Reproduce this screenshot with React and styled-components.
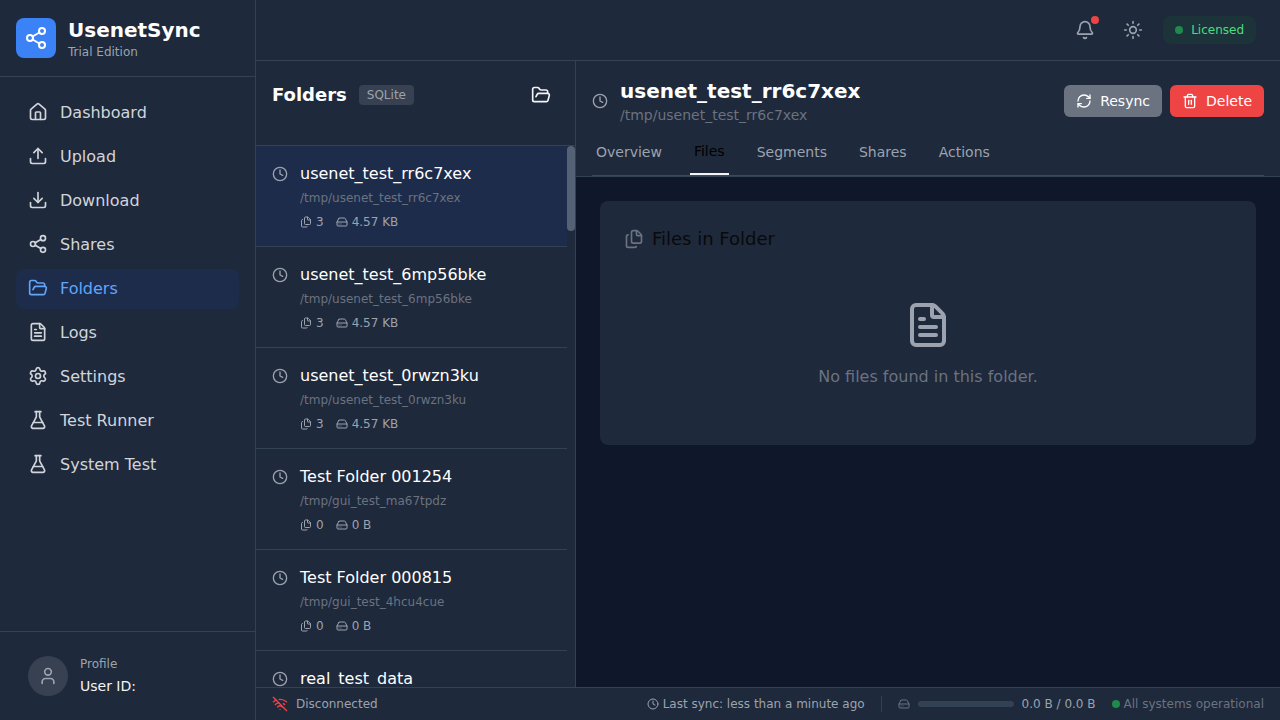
import React from 'react';
import styled, { createGlobalStyle } from 'styled-components';
import {
  Bell, Clock, Download, FileText, Files, FlaskConical, FolderOpen, HardDrive, House,
  RefreshCw, Settings, Share2, Sun, Trash2, Upload, User, WifiOff,
} from 'lucide-react';

const navItems = [
  { label: 'Dashboard', icon: House },
  { label: 'Upload', icon: Upload },
  { label: 'Download', icon: Download },
  { label: 'Shares', icon: Share2 },
  { label: 'Folders', icon: FolderOpen, active: true },
  { label: 'Logs', icon: FileText },
  { label: 'Settings', icon: Settings },
  { label: 'Test Runner', icon: FlaskConical },
  { label: 'System Test', icon: FlaskConical },
];

const folders = [
  { name: 'usenet_test_rr6c7xex', path: '/tmp/usenet_test_rr6c7xex', files: 3, size: '4.57 KB', active: true },
  { name: 'usenet_test_6mp56bke', path: '/tmp/usenet_test_6mp56bke', files: 3, size: '4.57 KB' },
  { name: 'usenet_test_0rwzn3ku', path: '/tmp/usenet_test_0rwzn3ku', files: 3, size: '4.57 KB' },
  { name: 'Test Folder 001254', path: '/tmp/gui_test_ma67tpdz', files: 0, size: '0 B' },
  { name: 'Test Folder 000815', path: '/tmp/gui_test_4hcu4cue', files: 0, size: '0 B' },
  { name: 'real_test_data', path: '/tmp/real_test_data', files: 0, size: '0 B' },
];

const tabs = ['Overview', 'Files', 'Segments', 'Shares', 'Actions'];

const App = () => (
  <>
    <GlobalStyle />
    <Page>
      <Sidebar>
        <Brand>
          <BrandIcon><Share2 size={24} color="#fff" /></BrandIcon>
          <div>
            <BrandName>UsenetSync</BrandName>
            <BrandEdition>Trial Edition</BrandEdition>
          </div>
        </Brand>
        <Nav>
          {navItems.map(({ label, icon: Icon, active }) => (
            <NavItem key={label} $active={active}>
              <Icon size={20} />
              {label}
            </NavItem>
          ))}
        </Nav>
        <Profile>
          <Avatar><User size={20} /></Avatar>
          <div>
            <ProfileLabel>Profile</ProfileLabel>
            <ProfileId>User ID:</ProfileId>
          </div>
        </Profile>
      </Sidebar>

      <Main>
        <TopBar>
          <IconButton>
            <Bell size={20} />
            <BellDot />
          </IconButton>
          <IconButton><Sun size={20} /></IconButton>
          <License><LicenseDot />Licensed</License>
        </TopBar>

        <Workspace>
          <FolderPanel>
            <FolderHead>
              <FolderTitle>Folders</FolderTitle>
              <Badge>SQLite</Badge>
              <OpenButton><FolderOpen size={20} /></OpenButton>
            </FolderHead>
            <FolderList>
              {folders.map((f) => (
                <FolderRow key={f.name} $active={f.active}>
                  <RowIcon><Clock size={16} /></RowIcon>
                  <div>
                    <RowName>{f.name}</RowName>
                    <RowPath>{f.path}</RowPath>
                    <RowMeta>
                      <MetaItem><Files size={12} />{f.files}</MetaItem>
                      <MetaItem><HardDrive size={12} />{f.size}</MetaItem>
                    </RowMeta>
                  </div>
                </FolderRow>
              ))}
              <ScrollThumb />
            </FolderList>
          </FolderPanel>

          <Detail>
            <DetailHead>
              <DetailTop>
                <RowIcon $plain><Clock size={16} /></RowIcon>
                <DetailText>
                  <DetailName>usenet_test_rr6c7xex</DetailName>
                  <DetailPath>/tmp/usenet_test_rr6c7xex</DetailPath>
                </DetailText>
                <ActionButton $color="#6b7280"><RefreshCw size={16} />Resync</ActionButton>
                <ActionButton $color="#ef4444"><Trash2 size={16} />Delete</ActionButton>
              </DetailTop>
              <Tabs>
                {tabs.map((t) => (
                  <Tab key={t} $active={t === 'Files'}>{t}</Tab>
                ))}
              </Tabs>
            </DetailHead>
            <DetailBody>
              <Card>
                <CardTitle>
                  <Files size={20} color="#6b7280" />
                  Files in Folder
                </CardTitle>
                <Empty>
                  <FileText size={48} color="#9ca3af" />
                  <EmptyText>No files found in this folder.</EmptyText>
                </Empty>
              </Card>
            </DetailBody>
          </Detail>
        </Workspace>

        <StatusBar>
          <Disconnected><WifiOff size={16} color="#ef4444" />Disconnected</Disconnected>
          <StatusRight>
            <SyncInfo><Clock size={12} />Last sync: less than a minute ago</SyncInfo>
            <Divider />
            <HardDrive size={12} color="#6b7280" />
            <Track />
            <SyncInfo>0.0 B / 0.0 B</SyncInfo>
            <Health><HealthDot />All systems operational</Health>
          </StatusRight>
        </StatusBar>
      </Main>
    </Page>
  </>
);

export default App;

const GlobalStyle = createGlobalStyle`
  * {
    box-sizing: border-box;
  }
  html, body {
    margin: 0;
    height: 100%;
    overflow: hidden;
  }
  body {
    font-family: "DejaVu Sans", sans-serif;
    background: #0f172a;
  }
`;

const Page = styled.div`
  display: flex;
  width: 1280px;
  height: 720px;
  overflow: hidden;
`;

const Sidebar = styled.aside`
  display: flex;
  flex-direction: column;
  width: 256px;
  flex-shrink: 0;
  background: #1e293b;
  border-right: 1px solid #334155;
`;

const Brand = styled.div`
  display: flex;
  align-items: center;
  gap: 12px;
  height: 77px;
  padding: 0 16px;
  border-bottom: 1px solid #334155;
`;

const BrandIcon = styled.div`
  display: flex;
  align-items: center;
  justify-content: center;
  width: 40px;
  height: 40px;
  border-radius: 8px;
  background: #3b82f6;
`;

const BrandName = styled.div`
  font-size: 20px;
  line-height: 28px;
  font-weight: 700;
  color: #fff;
`;

const BrandEdition = styled.div`
  font-size: 12px;
  line-height: 16px;
  color: #9ca3af;
`;

const Nav = styled.nav`
  display: flex;
  flex-direction: column;
  gap: 4px;
  flex: 1;
  padding: 16px;
`;

const NavItem = styled.a`
  display: flex;
  align-items: center;
  gap: 12px;
  height: 40px;
  padding: 0 12px 2px;
  border-radius: 8px;
  font-size: 16px;
  color: ${(p) => (p.$active ? '#60a5fa' : '#d1d5db')};
  background: ${(p) => (p.$active ? '#1e2c4b' : 'transparent')};
`;

const Profile = styled.div`
  display: flex;
  align-items: center;
  gap: 12px;
  height: 89px;
  padding: 0 28px;
  border-top: 1px solid #334155;
`;

const Avatar = styled.div`
  display: flex;
  align-items: center;
  justify-content: center;
  width: 40px;
  height: 40px;
  border-radius: 50%;
  background: #374151;
  color: #9ca3af;
`;

const ProfileLabel = styled.div`
  font-size: 12px;
  line-height: 16px;
  color: #9ca3af;
`;

const ProfileId = styled.div`
  margin-top: 4px;
  font-size: 14px;
  line-height: 20px;
  color: #f3f4f6;
`;

const Main = styled.div`
  display: flex;
  flex-direction: column;
  flex: 1;
  min-width: 0;
`;

const TopBar = styled.header`
  display: flex;
  align-items: center;
  justify-content: flex-end;
  gap: 12px;
  height: 61px;
  flex-shrink: 0;
  padding: 0 24px;
  background: #1e293b;
  border-bottom: 1px solid #334155;
`;

const IconButton = styled.div`
  position: relative;
  display: flex;
  padding: 8px;
  color: #9ca3af;
`;

const BellDot = styled.span`
  position: absolute;
  top: 4px;
  right: 4px;
  width: 8px;
  height: 8px;
  border-radius: 50%;
  background: #ef4444;
`;

const License = styled.div`
  display: flex;
  align-items: center;
  gap: 8px;
  height: 28px;
  padding: 0 12px;
  border-radius: 8px;
  font-size: 12px;
  color: #4ade80;
  background: #1c3439;
`;

const LicenseDot = styled.span`
  width: 8px;
  height: 8px;
  border-radius: 50%;
  background: #1f8a4c;
`;

const Workspace = styled.div`
  display: flex;
  flex: 1;
  min-height: 0;
`;

const FolderPanel = styled.section`
  display: flex;
  flex-direction: column;
  width: 320px;
  flex-shrink: 0;
  background: #1e293b;
  border-right: 1px solid #334155;
`;

const FolderHead = styled.div`
  display: flex;
  align-items: flex-start;
  height: 85px;
  flex-shrink: 0;
  padding: 20px 24px 0 16px;
  border-bottom: 1px solid #334155;
`;

const FolderTitle = styled.h2`
  margin: 0;
  font-size: 18px;
  line-height: 28px;
  font-weight: 700;
  color: #fff;
`;

const Badge = styled.span`
  margin: 4px 0 0 12px;
  padding: 2px 8px;
  border-radius: 4px;
  font-size: 12px;
  line-height: 16px;
  color: #9ca3af;
  background: #374151;
`;

const OpenButton = styled.div`
  display: flex;
  margin-left: auto;
  margin-top: 4px;
  color: #f3f4f6;
`;

const FolderList = styled.div`
  position: relative;
  flex: 1;
  min-height: 0;
  overflow: hidden;
  padding-right: 8px;
`;

const ScrollThumb = styled.span`
  position: absolute;
  top: 0;
  right: 0;
  width: 8px;
  height: 85px;
  border-radius: 4px;
  background: #556275;
`;

const FolderRow = styled.div`
  display: flex;
  gap: 12px;
  height: 101px;
  padding: 16px;
  border-bottom: 1px solid #334155;
  background: ${(p) => (p.$active ? '#1e2c4b' : 'transparent')};
`;

const RowIcon = styled.span`
  display: flex;
  flex-shrink: 0;
  padding-top: ${(p) => (p.$plain ? '0' : '4px')};
  color: #9ca3af;
`;

const RowName = styled.div`
  font-size: 16px;
  line-height: 24px;
  color: #fff;
`;

const RowPath = styled.div`
  margin-top: 4px;
  font-size: 12px;
  line-height: 16px;
  color: #6b7280;
`;

const RowMeta = styled.div`
  display: flex;
  gap: 12px;
  margin-top: 8px;
  font-size: 12px;
  line-height: 16px;
  color: #9ca3af;
`;

const MetaItem = styled.span`
  display: flex;
  align-items: center;
  gap: 4px;
`;

const Detail = styled.section`
  display: flex;
  flex-direction: column;
  flex: 1;
  min-width: 0;
`;

const DetailHead = styled.div`
  flex-shrink: 0;
  height: 116px;
  background: #1e293b;
  border-bottom: 1px solid #334155;
`;

const DetailTop = styled.div`
  display: flex;
  align-items: center;
  gap: 8px;
  padding: 16px 16px 0;
`;

const DetailText = styled.div`
  flex: 1;
  margin-left: 4px;
`;

const DetailName = styled.h1`
  margin: 0;
  font-size: 20px;
  line-height: 28px;
  font-weight: 700;
  color: #fff;
`;

const DetailPath = styled.div`
  font-size: 14px;
  line-height: 20px;
  color: #6b7280;
`;

const ActionButton = styled.button`
  display: flex;
  align-items: center;
  gap: 8px;
  height: 32px;
  padding: 0 12px;
  border: none;
  border-radius: 6px;
  font-family: inherit;
  font-size: 14px;
  color: #fff;
  background: ${(p) => p.$color};
`;

const Tabs = styled.div`
  display: flex;
  align-items: flex-end;
  gap: 24px;
  height: 51px;
  margin: 0 16px;
  border-bottom: 1px solid #3a4a5e;
`;

const Tab = styled.div`
  padding: 0 4px ${(p) => (p.$active ? '12px' : '11px')};
  font-size: 14px;
  line-height: 20px;
  color: ${(p) => (p.$active ? '#000' : '#9ca3af')};
  border-bottom: 2px solid ${(p) => (p.$active ? '#f3f4f6' : 'transparent')};
`;

const DetailBody = styled.div`
  flex: 1;
  padding: 24px;
  background: #0f172a;
`;

const Card = styled.div`
  height: 244px;
  padding: 24px;
  border-radius: 8px;
  background: #1e293b;
`;

const CardTitle = styled.h3`
  display: flex;
  align-items: center;
  gap: 8px;
  margin: 0;
  font-size: 18px;
  line-height: 28px;
  font-weight: 400;
  color: #0a0a0a;
`;

const Empty = styled.div`
  display: flex;
  flex-direction: column;
  align-items: center;
  gap: 16px;
  margin-top: 48px;
`;

const EmptyText = styled.div`
  font-size: 16px;
  line-height: 24px;
  color: #6b7280;
`;

const StatusBar = styled.footer`
  display: flex;
  align-items: center;
  justify-content: space-between;
  height: 33px;
  flex-shrink: 0;
  padding: 0 16px;
  font-size: 12px;
  color: #9ca3af;
  background: #1e293b;
  border-top: 1px solid #334155;
`;

const Disconnected = styled.div`
  display: flex;
  align-items: center;
  gap: 8px;
`;

const StatusRight = styled.div`
  display: flex;
  align-items: center;
  gap: 8px;
`;

const SyncInfo = styled.div`
  display: flex;
  align-items: center;
  gap: 4px;
`;

const Divider = styled.span`
  width: 1px;
  height: 16px;
  margin: 0 8px;
  background: #334155;
`;

const Track = styled.span`
  width: 96px;
  height: 6px;
  border-radius: 3px;
  background: #334155;
`;

const Health = styled.div`
  display: flex;
  align-items: center;
  gap: 4px;
  margin-left: 8px;
  color: #6b7280;
`;

const HealthDot = styled.span`
  width: 8px;
  height: 8px;
  border-radius: 50%;
  background: #1f8a4c;
`;
